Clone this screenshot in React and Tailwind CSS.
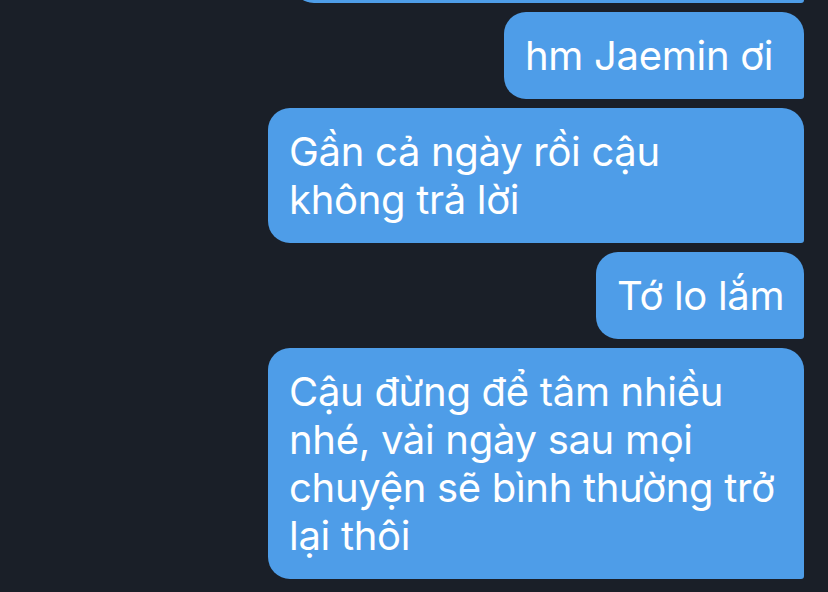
export default function App() {
  const bubble =
    "bg-[#4e9de8] text-white rounded-tl-[22px] rounded-bl-[22px] rounded-tr-[22px] rounded-br-[3px] px-[21px] py-[19.5px] text-[40px] leading-[48px] tracking-[-0.3px]";
  return (
    <div
      className="w-[828px] h-[592px] overflow-hidden bg-[#1a1f28] flex flex-col items-end pr-[24px] gap-[9px]"
      style={{ fontFamily: "Inter, 'Noto Sans', sans-serif" }}
    >
      <div className="w-[512px] h-[100px] mt-[-97px] shrink-0 bg-[#4e9de8] rounded-[22px] rounded-br-[3px]" />
      <div className={`${bubble} w-[300px] shrink-0 whitespace-nowrap`}>hm Jaemin ơi</div>
      <div className={`${bubble} w-[536px] shrink-0 whitespace-nowrap`}>
        Gần cả ngày rồi cậu
        <br />
        không trả lời
      </div>
      <div className={`${bubble} w-[208px] shrink-0 whitespace-nowrap`}>Tớ lo lắm</div>
      <div className={`${bubble} w-[536px] shrink-0 whitespace-nowrap`}>
        Cậu đừng để tâm nhiều
        <br />
        nhé, vài ngày sau mọi
        <br />
        chuyện sẽ bình thường trở
        <br />
        lại thôi
      </div>
    </div>
  );
}
